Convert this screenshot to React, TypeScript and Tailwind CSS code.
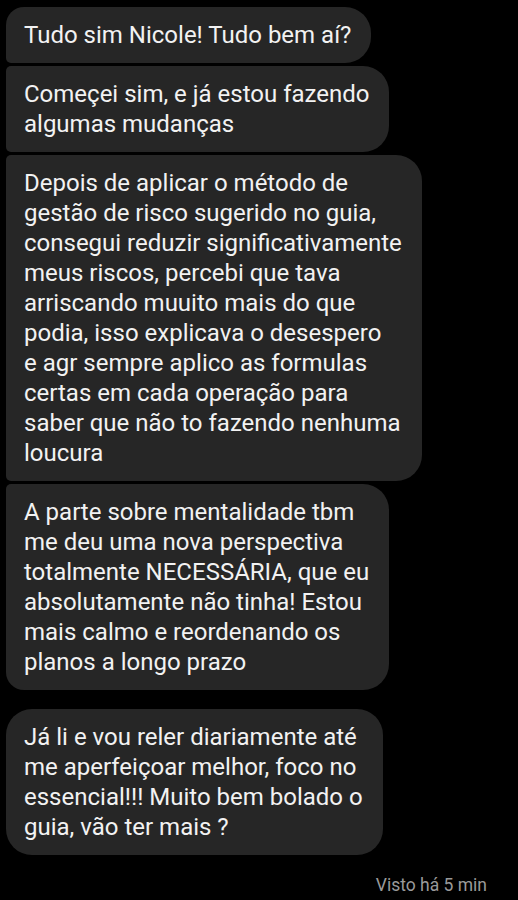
import React from 'react';

type Msg = { lines: string[]; first?: boolean; last?: boolean };

const messages: Msg[] = [
  { lines: ['Tudo sim Nicole! Tudo bem aí?'], first: true },
  { lines: ['Começei sim, e já estou fazendo', 'algumas mudanças'] },
  {
    lines: [
      'Depois de aplicar o método de',
      'gestão de risco sugerido no guia,',
      'consegui reduzir significativamente',
      'meus riscos, percebi que tava',
      'arriscando muuito mais do que',
      'podia, isso explicava o desespero',
      'e agr sempre aplico as formulas',
      'certas em cada operação para',
      'saber que não to fazendo nenhuma',
      'loucura',
    ],
  },
  {
    lines: [
      'A parte sobre mentalidade tbm',
      'me deu uma nova perspectiva',
      'totalmente NECESSÁRIA, que eu',
      'absolutamente não tinha! Estou',
      'mais calmo e reordenando os',
      'planos a longo prazo',
    ],
    last: true,
  },
];

const lastMsg: string[] = [
  'Já li e vou reler diariamente até',
  'me aperfeiçoar melhor, foco no',
  'essencial!!! Muito bem bolado o',
  'guia, vão ter mais ?',
];

const Bubble = ({ lines, corners }: { lines: string[]; corners: string }) => (
  <div
    className={`w-fit bg-[#262626] text-[#f2f2f2] text-[24px] leading-[30px] pl-[18px] pr-[20px] py-[13px] whitespace-nowrap ${corners}`}
  >
    {lines.map((l, i) => (
      <div key={i}>{l}</div>
    ))}
  </div>
);

export default function App() {
  return (
    <div
      className="bg-black w-[518px] h-[900px] overflow-hidden flex flex-col pt-[7px] px-[6px]"
      style={{ fontFamily: 'Roboto, "Noto Sans", sans-serif' }}
    >
      <div className="flex flex-col gap-[3px]">
        {messages.map((m, i) => (
          <Bubble
            key={i}
            lines={m.lines}
            corners={
              m.first
                ? 'rounded-r-[26px] rounded-tl-[18px] rounded-bl-[5px]'
                : m.last
                ? 'rounded-r-[26px] rounded-tl-[5px] rounded-bl-[18px]'
                : 'rounded-r-[26px] rounded-l-[5px]'
            }
          />
        ))}
      </div>
      <div className="mt-[19px]">
        <Bubble lines={lastMsg} corners="rounded-[26px]" />
      </div>
      <div className="flex justify-end pr-[25px] mt-[19px]">
        <span className="text-[17.5px] leading-[22px] text-[#9a9a9a]">Visto há 5 min</span>
      </div>
    </div>
  );
}
